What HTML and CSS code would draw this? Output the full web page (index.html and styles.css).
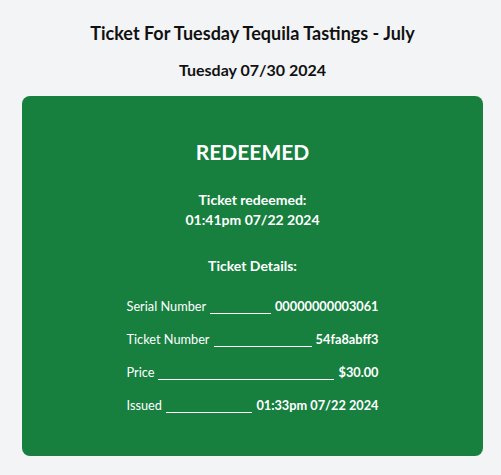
FILE: index.html
```html
<!DOCTYPE html>
<html>
<head>
<meta charset="utf-8">
<link rel="stylesheet" href="styles.css">
</head>
<body>
<main class="page">
  <h1 class="title">Ticket For Tuesday Tequila Tastings - July</h1>
  <h2 class="date">Tuesday 07/30 2024</h2>
  <section class="card">
    <div class="status">REDEEMED</div>
    <div class="redeemed">Ticket redeemed:<br>01:41pm 07/22 2024</div>
    <div class="details-title">Ticket Details:</div>
    <div class="rows">
      <div class="row"><span class="label">Serial Number</span><span class="fill"></span><span class="value">00000000003061</span></div>
      <div class="row"><span class="label">Ticket Number</span><span class="fill"></span><span class="value">54fa8abff3</span></div>
      <div class="row"><span class="label">Price</span><span class="fill"></span><span class="value">$30.00</span></div>
      <div class="row"><span class="label">Issued</span><span class="fill"></span><span class="value">01:33pm 07/22 2024</span></div>
    </div>
  </section>
</main>
</body>
</html>
```
FILE: styles.css
```css
html, body {
  margin: 0;
  padding: 0;
  background: #f3f4f6;
  font-family: Lato, "Open Sans", sans-serif;
  color: #111;
}
.page {
  width: 461px;
  margin-left: 22px;
  padding-top: 19px;
}
.title {
  margin: 0;
  text-align: center;
  font-size: 18px;
  line-height: 28px;
  font-weight: 700;
}
.date {
  margin: 11px 0 0;
  text-align: center;
  font-size: 16px;
  line-height: 24px;
  font-weight: 700;
}
.card {
  margin-top: 14px;
  background: #17803f;
  border-radius: 8px;
  color: #fff;
  height: 360px;
  box-sizing: border-box;
  padding-top: 42px;
  text-align: center;
}
.status {
  font-size: 21px;
  line-height: 28px;
  font-weight: 700;
}
.redeemed {
  margin-top: 24px;
  font-size: 14px;
  line-height: 20px;
  font-weight: 700;
}
.details-title {
  margin-top: 26px;
  font-size: 14px;
  line-height: 20px;
  font-weight: 700;
}
.rows {
  width: 252px;
  margin: 20px auto 0;
  display: flex;
  flex-direction: column;
  gap: 13px;
}
.row {
  display: flex;
  align-items: flex-end;
  font-size: 12.75px;
  line-height: 20px;
}
.label {
  font-weight: 400;
}
.fill {
  flex: 1;
  border-bottom: 1px solid #fff;
  margin: 0 4px 2px 4px;
}
.value {
  font-weight: 700;
}
```
